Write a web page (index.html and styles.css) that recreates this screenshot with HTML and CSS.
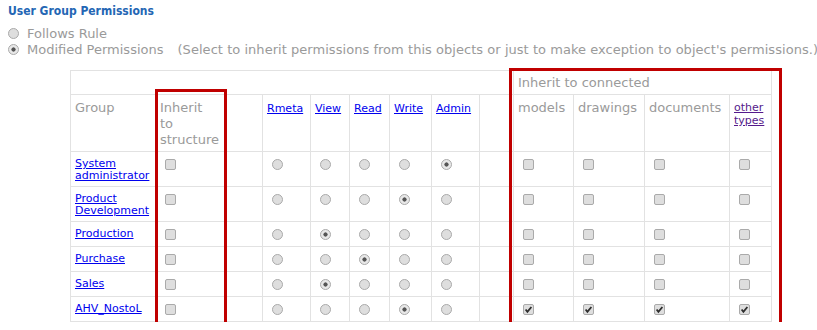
FILE: index.html
```html
<!DOCTYPE html>
<html>
<head>
<meta charset="utf-8">
<link rel="stylesheet" href="styles.css">
</head>
<body>
<div class="page">
  <h1 class="title">User Group Permissions</h1>
  <div class="opt"><span class="rb"></span><span>Follows Rule</span></div>
  <div class="opt"><span class="rb on"></span><span>Modified Permissions</span><span class="hint">(Select to inherit permissions from this objects or just to make exception to object's permissions.)</span></div>

  <div class="wrap">
    <table class="perm">
      <colgroup>
        <col style="width:85px"><col style="width:107px"><col style="width:48px"><col style="width:39px"><col style="width:40px"><col style="width:42px"><col style="width:48px"><col style="width:34px"><col style="width:60px"><col style="width:71px"><col style="width:85px"><col style="width:42px">
      </colgroup>
      <thead>
        <tr class="h1">
          <th colspan="8"></th>
          <th colspan="4">Inherit to connected</th>
        </tr>
        <tr class="h2">
          <th>Group</th>
          <th>Inherit<br>to<br>structure</th>
          <th><a href="#">Rmeta</a></th>
          <th><a href="#">View</a></th>
          <th><a href="#">Read</a></th>
          <th><a href="#">Write</a></th>
          <th><a href="#">Admin</a></th>
          <th></th>
          <th>models</th>
          <th>drawings</th>
          <th>documents</th>
          <th><a href="#" class="visited">other<br>types</a></th>
        </tr>
      </thead>
      <tbody>
        <tr class="tall">
          <td><a href="#">System<br>administrator</a></td>
          <td><span class="cb"></span></td>
          <td><span class="rb"></span></td><td><span class="rb"></span></td><td><span class="rb"></span></td><td><span class="rb"></span></td><td><span class="rb on"></span></td>
          <td></td>
          <td><span class="cb"></span></td><td><span class="cb"></span></td><td><span class="cb"></span></td><td><span class="cb"></span></td>
        </tr>
        <tr class="tall">
          <td><a href="#">Product<br>Development</a></td>
          <td><span class="cb"></span></td>
          <td><span class="rb"></span></td><td><span class="rb"></span></td><td><span class="rb"></span></td><td><span class="rb on"></span></td><td><span class="rb"></span></td>
          <td></td>
          <td><span class="cb"></span></td><td><span class="cb"></span></td><td><span class="cb"></span></td><td><span class="cb"></span></td>
        </tr>
        <tr>
          <td><a href="#">Production</a></td>
          <td><span class="cb"></span></td>
          <td><span class="rb"></span></td><td><span class="rb on"></span></td><td><span class="rb"></span></td><td><span class="rb"></span></td><td><span class="rb"></span></td>
          <td></td>
          <td><span class="cb"></span></td><td><span class="cb"></span></td><td><span class="cb"></span></td><td><span class="cb"></span></td>
        </tr>
        <tr>
          <td><a href="#">Purchase</a></td>
          <td><span class="cb"></span></td>
          <td><span class="rb"></span></td><td><span class="rb"></span></td><td><span class="rb on"></span></td><td><span class="rb"></span></td><td><span class="rb"></span></td>
          <td></td>
          <td><span class="cb"></span></td><td><span class="cb"></span></td><td><span class="cb"></span></td><td><span class="cb"></span></td>
        </tr>
        <tr>
          <td><a href="#">Sales</a></td>
          <td><span class="cb"></span></td>
          <td><span class="rb"></span></td><td><span class="rb on"></span></td><td><span class="rb"></span></td><td><span class="rb"></span></td><td><span class="rb"></span></td>
          <td></td>
          <td><span class="cb"></span></td><td><span class="cb"></span></td><td><span class="cb"></span></td><td><span class="cb"></span></td>
        </tr>
        <tr>
          <td><a href="#">AHV_NostoL</a></td>
          <td><span class="cb"></span></td>
          <td><span class="rb"></span></td><td><span class="rb"></span></td><td><span class="rb"></span></td><td><span class="rb on"></span></td><td><span class="rb"></span></td>
          <td></td>
          <td><span class="cb on"><svg viewBox="0 0 10 10"><path d="M1.8 5 L3.8 7.6 L8.2 2.2" fill="none" stroke="#2e2e2e" stroke-width="2"/></svg></span></td>
          <td><span class="cb on"><svg viewBox="0 0 10 10"><path d="M1.8 5 L3.8 7.6 L8.2 2.2" fill="none" stroke="#2e2e2e" stroke-width="2"/></svg></span></td>
          <td><span class="cb on"><svg viewBox="0 0 10 10"><path d="M1.8 5 L3.8 7.6 L8.2 2.2" fill="none" stroke="#2e2e2e" stroke-width="2"/></svg></span></td>
          <td><span class="cb on"><svg viewBox="0 0 10 10"><path d="M1.8 5 L3.8 7.6 L8.2 2.2" fill="none" stroke="#2e2e2e" stroke-width="2"/></svg></span></td>
        </tr>
      </tbody>
    </table>
    <div class="mark mark-structure"></div>
    <div class="mark mark-connected"></div>
  </div>
</div>
</body>
</html>
```

FILE: styles.css
```css
html, body {
  margin: 0;
  padding: 0;
  background: #fff;
}
body {
  font-family: "DejaVu Sans", sans-serif;
  color: #999;
}
.page {
  padding: 4px 8px 0 8px;
}
.title {
  margin: 0 0 7px 0;
  font-family: "DejaVu Sans Condensed", "DejaVu Sans", sans-serif;
  font-size: 12px;
  font-weight: bold;
  color: #2466b4;
  line-height: 14px;
}
.opt {
  display: flex;
  align-items: center;
  height: 16px;
  font-size: 13px;
  color: #9a9a9a;
  white-space: nowrap;
}
.opt > span {
  flex-shrink: 0;
}
.opt .rb {
  margin: 0 8px 0 0;
}
.hint {
  margin-left: 14px;
  letter-spacing: 0.04px;
}
.wrap {
  position: relative;
  margin: 13px 0 0 62px;
  width: 712px;
}
.perm {
  border-collapse: collapse;
  table-layout: fixed;
  width: 701px;
  border: 1px solid #e2e2e2;
}
.perm th, .perm td {
  border: 1px solid #e2e2e2;
  text-align: left;
  vertical-align: top;
  padding: 0 4px;
}
.perm th {
  font-weight: normal;
  font-size: 13px;
  line-height: 16px;
  color: #9a9a9a;
}
.h1 th {
  height: 24px;
  padding-top: 4px;
  box-sizing: border-box;
}
.h2 th {
  height: 57px;
  padding-top: 5px;
  box-sizing: border-box;
}
.h2 a {
  font-size: 11px;
  line-height: 13px;
  display: inline-block;
  padding-top: 1px;
}
a {
  color: #0000ee;
  text-decoration: underline;
}
a.visited {
  color: #551a8b;
}
.perm td {
  height: 25px;
  box-sizing: border-box;
  font-size: 11px;
  line-height: 12px;
  padding-top: 6px;
}
.perm tr.tall td {
  height: 35px;
}
.rb, .cb {
  display: inline-block;
  width: 11px;
  height: 11px;
  box-sizing: border-box;
  border: 1px solid #aaaaaa;
  background: #dedede;
  vertical-align: top;
}
.perm .rb, .perm .cb {
  margin: 1px 0 0 5px;
}
.rb {
  border-radius: 50%;
}
.rb.on {
  background: radial-gradient(circle, #555 0 1.8px, #e8e8e8 2.4px);
}
.cb {
  border-radius: 2px;
}
.cb svg {
  display: block;
  width: 9px;
  height: 9px;
}
.mark {
  position: absolute;
  border: 3px solid #c00000;
  box-sizing: border-box;
  pointer-events: none;
}
.mark-structure {
  left: 85px;
  top: 19px;
  width: 72px;
  height: 237px;
}
.mark-connected {
  left: 439px;
  top: -2px;
  width: 273px;
  height: 258px;
}
```
